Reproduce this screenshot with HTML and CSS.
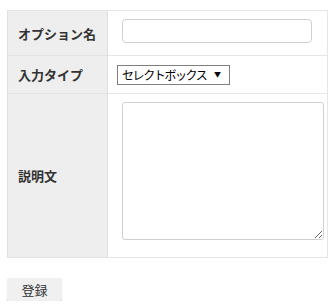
FILE: index.html
```html
<!DOCTYPE html>
<html lang="ja">
<head>
<meta charset="utf-8">
<title>オプション</title>
<link rel="stylesheet" href="styles.css">
</head>
<body>
<form class="option-form">
  <div class="form-grid">
    <div class="label-cell row-name">オプション名</div>
    <div class="value-cell row-name"><input class="text-input" type="text"></div>
    <div class="label-cell row-type">入力タイプ</div>
    <div class="value-cell row-type">
      <span class="select-wrap">
        <select class="type-select">
          <option>セレクトボックス</option>
        </select>
        <span class="select-arrow">▼</span>
      </span>
    </div>
    <div class="label-cell row-desc">説明文</div>
    <div class="value-cell row-desc"><textarea class="desc-input"></textarea></div>
  </div>
  <div class="actions">
    <button class="submit-btn" type="button">登録</button>
  </div>
</form>
</body>
</html>
```

FILE: styles.css
```css
* { box-sizing: border-box; }

html, body {
  margin: 0;
  background: #fff;
}

body {
  padding: 10px 0 0 7px;
  font-family: "Noto Sans CJK JP", "Noto Sans", sans-serif;
  color: #333;
}

.form-grid {
  display: grid;
  grid-template-columns: 100px 220px;
  grid-template-rows: 45px 38px 164px;
  width: 321px;
  border-top: 1px solid #e6e6e6;
  border-left: 1px solid #e0e0e0;
}

.label-cell,
.value-cell {
  border-right: 1px solid #e6e6e6;
  border-bottom: 1px solid #e6e6e6;
}

.label-cell {
  background: #eeeeee;
  border-right-color: #dedede;
  border-bottom-color: #e2e2e2;
  display: flex;
  align-items: center;
  padding-left: 10px;
  font-size: 13px;
  font-weight: bold;
  color: #333;
}

.value-cell {
  padding: 8px 0 0 14px;
}

.row-type.value-cell { padding-top: 9px; padding-left: 9px; }

.text-input {
  display: block;
  width: 190px;
  height: 24px;
  border: 1px solid #d0d0d0;
  border-radius: 4px;
  background: #fff;
  margin: 0;
}

.select-wrap {
  position: relative;
  display: block;
  width: 113px;
  height: 20px;
}

.type-select {
  appearance: none;
  -webkit-appearance: none;
  display: block;
  width: 113px;
  height: 20px;
  margin: 0;
  padding: 0 0 0 4px;
  border: 1px solid #7f7f7f;
  border-radius: 0;
  background: #fff;
  font-family: "Noto Sans CJK JP", sans-serif;
  font-size: 12px;
  letter-spacing: -1.4px;
  line-height: 18px;
  color: #000;
}

.select-arrow {
  position: absolute;
  right: 9px;
  top: 5px;
  font-size: 7px;
  line-height: 9px;
  color: #000;
  pointer-events: none;
}

.desc-input {
  display: block;
  width: 202px;
  height: 138px;
  margin: 0;
  border: 1px solid #d0d0d0;
  border-radius: 3px;
  background: #fff;
}

.actions {
  margin-top: 20px;
}

.submit-btn {
  display: block;
  width: 55px;
  height: 23px;
  border: none;
  border-radius: 2px;
  background: #f0f0f0;
  box-shadow: 0 1px 1px rgba(0, 0, 0, 0.22);
  font-family: "Noto Sans CJK JP", sans-serif;
  font-size: 13px;
  color: #333;
  padding: 0;
  line-height: 23px;
}
```
